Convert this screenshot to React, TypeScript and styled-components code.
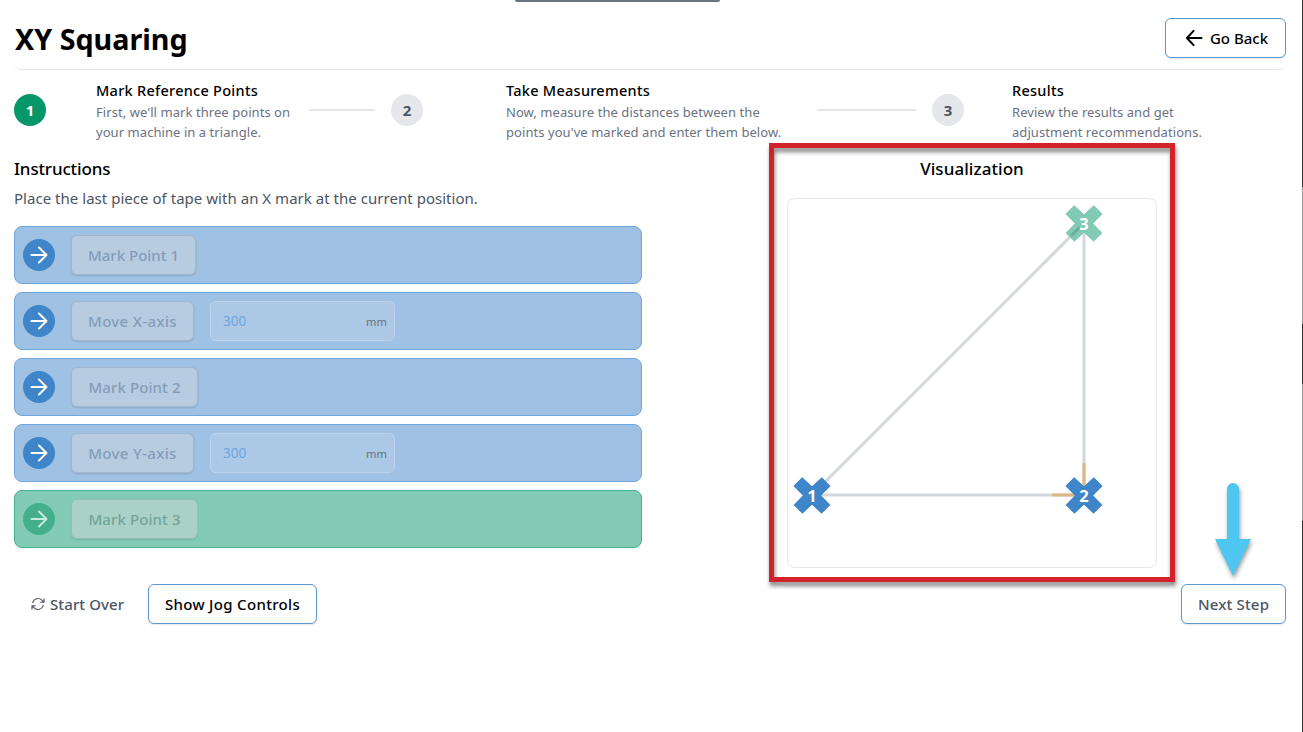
import React from "react";
import styled, { createGlobalStyle } from "styled-components";

const Global = createGlobalStyle`
  *, *::before, *::after { box-sizing: border-box; }
  body { margin: 0; background: #fff; overflow: hidden; }
  button, input { font: inherit; }
`;

const Page = styled.div`
  position: relative;
  width: 1303px;
  height: 732px;
  padding: 18px 17px 0 14px;
  overflow: hidden;
  background: #fff;
  color: #000;
  font-family: "Noto Sans", sans-serif;
  font-size: 15px;
`;

const TopHandle = styled.div`
  position: absolute;
  top: 0;
  left: 515px;
  width: 205px;
  height: 2px;
  background: #6b7280;
  border-radius: 0 0 3px 3px;
`;

const WindowEdge = styled.div`
  position: absolute;
  top: 0;
  right: 0;
  width: 1px;
  height: 732px;
  background: linear-gradient(
    #333 187px, #999 187px, #999 324px, #333 324px, #333 384px,
    #999 384px, #999 521px, #333 521px
  );
`;

const Header = styled.header`
  display: flex;
  justify-content: space-between;
  align-items: flex-start;
  height: 52px;
  border-bottom: 1px solid #e5e7eb;
  border-radius: 8px;
`;

const Title = styled.h1`
  margin: 0 0 0 1px;
  font-size: 28.7px;
  line-height: 42px;
  font-weight: 700;
`;

const Button = styled.button<{ $muted?: boolean; $tracking?: number }>`
  display: inline-flex;
  align-items: center;
  justify-content: center;
  height: 40px;
  padding: 0 16px;
  border: 1px solid #5e97cf;
  border-radius: 6px;
  background: #fff;
  color: ${(p) => (p.$muted ? "#4b5563" : "#000")};
  font-weight: 500;
  letter-spacing: ${(p) => p.$tracking ?? 0}px;
  white-space: nowrap;
  box-shadow: 0 1px 2px rgba(0, 0, 0, 0.1);
`;

const BackButton = styled(Button)`
  width: 121px;
  gap: 6px;
  padding-left: 17px;
`;

const Stepper = styled.ol`
  display: grid;
  grid-template-columns: 32px 50px 213px 66px 16px 32px 83px 311px 99px 16px 32px 48px 1fr;
  align-items: center;
  height: 60px;
  margin: 12px 0 0;
  padding: 0;
  list-style: none;
`;

const StepNumber = styled.span<{ $col: number; $active?: boolean }>`
  grid-column: ${(p) => p.$col};
  display: grid;
  place-items: center;
  width: 32px;
  height: 32px;
  margin-top: -4px;
  border-radius: 50%;
  background: ${(p) => (p.$active ? "#059669" : "#e5e7eb")};
  color: ${(p) => (p.$active ? "#fff" : "#4b5563")};
  font-weight: 700;
`;

const StepText = styled.div<{ $col: number }>`
  grid-column: ${(p) => p.$col};
  white-space: nowrap;
`;

const StepTitle = styled.div`
  margin-top: -3px;
  font-size: 14.5px;
  line-height: 20px;
  font-weight: 500;
  letter-spacing: 0.27px;
`;

const StepNote = styled.div`
  margin-top: 2px;
  font-size: 13px;
  line-height: 20px;
  letter-spacing: 0.06px;
  color: #6b7280;
`;

const Connector = styled.span<{ $col: number }>`
  grid-column: ${(p) => p.$col};
  height: 2px;
  margin-top: -4px;
  background: #e5e7eb;
`;

const Main = styled.main`
  display: flex;
  justify-content: space-between;
  height: 427px;
  margin-top: 15px;
`;

const Instructions = styled.section`
  width: 628px;
`;

const SectionTitle = styled.h2`
  margin: 0;
  font-size: 17px;
  line-height: 24px;
  font-weight: 500;
  letter-spacing: -0.15px;
`;

const Lead = styled.p`
  margin: 6px 0 17px;
  line-height: 22px;
  letter-spacing: 0.03px;
  color: #4b5563;
`;

const Tasks = styled.div`
  display: flex;
  flex-direction: column;
  gap: 8px;
`;

const Task = styled.div<{ $current?: boolean }>`
  display: flex;
  align-items: center;
  height: 58px;
  padding-left: 8px;
  border: 1px solid ${(p) => (p.$current ? "#44b08b" : "#6fa6dc")};
  border-radius: 8px;
  background: ${(p) => (p.$current ? "#84cbb5" : "#9fc1e4")};
`;

const TaskIcon = styled.span<{ $current?: boolean }>`
  display: grid;
  place-items: center;
  width: 32px;
  height: 32px;
  margin-right: 16px;
  border-radius: 50%;
  background: ${(p) => (p.$current ? "#44b08b" : "#3f85c9")};
  color: ${(p) => (p.$current ? "#c9e8de" : "#fff")};
`;

const TaskButton = styled.button<{ $width: number; $tracking: number; $current?: boolean }>`
  width: ${(p) => p.$width}px;
  height: 40px;
  padding: 0;
  border: 1px solid ${(p) => (p.$current ? "#97bfb1" : "#a3b6cd")};
  border-radius: 6px;
  background: ${(p) => (p.$current ? "#a9d1c6" : "#b7cbe1")};
  color: ${(p) => (p.$current ? "#75a496" : "#849db9")};
  font-weight: 500;
  letter-spacing: ${(p) => p.$tracking}px;
  white-space: nowrap;
  box-shadow: 0 1px 2px rgba(0, 0, 0, 0.12);
`;

const Distance = styled.div`
  display: flex;
  align-items: center;
  justify-content: space-between;
  width: 185px;
  height: 40px;
  margin-left: 16px;
  padding: 0 7px 0 12px;
  border: 1px solid #bdd3eb;
  border-radius: 6px;
  background: #abc8e6;
  color: #6fa5de;
  font-size: 13.5px;
`;

const Unit = styled.span`
  font-size: 11.2px;
  color: #6b7280;
`;

const Visualization = styled.section`
  position: relative;
  width: 370px;
  margin-right: 129px;
`;

const PlotTitle = styled(SectionTitle)`
  text-align: center;
  letter-spacing: 0.06px;
`;

const Plot = styled.div`
  height: 370px;
  margin-top: 17px;
  border: 1px solid #e5e7eb;
  border-radius: 8px;

  svg { display: block; margin: -1px; }
`;

const Highlight = styled.div`
  position: absolute;
  top: -14px;
  left: -18px;
  width: 406px;
  height: 439px;
  border: 5px solid #d2232a;
  filter: drop-shadow(1px 4px 2px rgba(0, 0, 0, 0.48));
`;

const Footer = styled.footer`
  display: flex;
  align-items: center;
`;

const StartOver = styled.button`
  display: inline-flex;
  align-items: center;
  gap: 4px;
  width: 134px;
  height: 40px;
  padding: 0 0 0 16px;
  border: 0;
  background: none;
  color: #4b5563;
  font-weight: 500;
  letter-spacing: 0.1px;
  white-space: nowrap;
`;

const JogButton = styled(Button)`
  width: 169px;
`;

const NextButton = styled(Button)`
  width: 105px;
  margin-left: auto;
`;

const Pointer = styled.svg`
  position: absolute;
  left: 1205px;
  top: 473px;
  filter: drop-shadow(1px 3px 2px rgba(0, 0, 0, 0.4));
`;

const ArrowIcon = ({ back = false, size = 24 }) => (
  <svg width={size} height={size} viewBox="0 0 24 24" fill="none" stroke="currentColor"
    strokeWidth={back ? 2.4 : 2} strokeLinecap="round" strokeLinejoin="round">
    <path d={back ? "M21 12H3.5M11.5 3.5L3.5 12L11.5 20.5" : "M4.5 12H19.5M12 4.5L19.5 12L12 19.5"} />
  </svg>
);

const RefreshIcon = () => (
  <svg width="16" height="16" viewBox="0 0 24 24" fill="none" stroke="currentColor"
    strokeWidth="1.7" strokeLinecap="round" strokeLinejoin="round">
    <path d="M16.023 9.348h4.992V4.356M2.985 19.644v-4.992h4.992M2.985 14.652l3.181 3.183a8.25 8.25 0 0 0 13.803-3.7M4.031 9.865a8.25 8.25 0 0 1 13.803-3.7l3.181 3.182" />
  </svg>
);

type MarkProps = { x: number; y: number; label: string; color: string };

const Mark = ({ x, y, label, color }: MarkProps) => (
  <g transform={`translate(${x} ${y})`}>
    <path
      d="M0 -9.3L9.8 -18.3L18.6 -9.6L9.2 0L18.4 9.4L9.6 18.2L0 9.2L-9.6 18.2L-18.4 9.4L-9.2 0L-18.6 -9.6L-9.8 -18.3Z"
      fill={color}
    />
    {label && (
      <text y="6.5" textAnchor="middle" fill="#fff" fontSize="16.5" fontWeight="700">{label}</text>
    )}
  </g>
);

const tasks = [
  { label: "Mark Point 1", width: 125, tracking: 0 },
  { label: "Move X-axis", width: 123, tracking: 0.35, distance: 300 },
  { label: "Mark Point 2", width: 127, tracking: 0.1 },
  { label: "Move Y-axis", width: 123, tracking: 0.35, distance: 300 },
  { label: "Mark Point 3", width: 127, tracking: 0.1, current: true },
];

export default function App() {
  return (
    <Page>
      <Global />
      <TopHandle />
      <Header>
        <Title>XY Squaring</Title>
        <BackButton><ArrowIcon back size={20} />Go Back</BackButton>
      </Header>

      <Stepper>
        <StepNumber $col={1} $active>1</StepNumber>
        <StepText $col={3}>
          <StepTitle>Mark Reference Points</StepTitle>
          <StepNote>First, we'll mark three points on<br />your machine in a triangle.</StepNote>
        </StepText>
        <Connector $col={4} />
        <StepNumber $col={6}>2</StepNumber>
        <StepText $col={8}>
          <StepTitle>Take Measurements</StepTitle>
          <StepNote>Now, measure the distances between the<br />points you've marked and enter them below.</StepNote>
        </StepText>
        <Connector $col={9} />
        <StepNumber $col={11}>3</StepNumber>
        <StepText $col={13}>
          <StepTitle>Results</StepTitle>
          <StepNote>Review the results and get<br />adjustment recommendations.</StepNote>
        </StepText>
      </Stepper>

      <Main>
        <Instructions>
          <SectionTitle>Instructions</SectionTitle>
          <Lead>Place the last piece of tape with an X mark at the current position.</Lead>
          <Tasks>
            {tasks.map((task) => (
              <Task key={task.label} $current={task.current}>
                <TaskIcon $current={task.current}><ArrowIcon /></TaskIcon>
                <TaskButton $width={task.width} $tracking={task.tracking} $current={task.current}>
                  {task.label}
                </TaskButton>
                {task.distance && (
                  <Distance>{task.distance}<Unit>mm</Unit></Distance>
                )}
              </Task>
            ))}
          </Tasks>
        </Instructions>

        <Visualization>
          <PlotTitle>Visualization</PlotTitle>
          <Plot>
            <svg width="370" height="370" viewBox="0 0 370 370">
              <g stroke="#d1d7db" strokeWidth="3">
                <path d="M25 297H297" />
                <path d="M297 297V35" />
                <path d="M25 297L293 29" />
              </g>
              <path d="M265 297H297V265" fill="none" stroke="#deb684" strokeWidth="3" />
              <Mark x={25} y={297.5} label="1" color="#3f85c9" />
              <Mark x={297} y={297.5} label="2" color="#3f85c9" />
              <Mark x={297} y={25.5} label="" color="#82cab4" />
              <path d="M284 38L293 29" stroke="#6bb09b" strokeWidth="3" />
              <text x="297" y="32" textAnchor="middle" fill="#fff" fontSize="16.5" fontWeight="700">3</text>
            </svg>
          </Plot>
          <Highlight />
        </Visualization>
      </Main>

      <Footer>
        <StartOver><RefreshIcon />Start Over</StartOver>
        <JogButton $tracking={0.33}>Show Jog Controls</JogButton>
        <NextButton $muted $tracking={0.18}>Next Step</NextButton>
      </Footer>

      <Pointer width="56" height="110" viewBox="0 0 56 110">
        <path d="M22 16a6 6 0 0 1 12 0V66H46L28 103L10 66H22Z" fill="#4fc6f0" />
      </Pointer>
      <WindowEdge />
    </Page>
  );
}
